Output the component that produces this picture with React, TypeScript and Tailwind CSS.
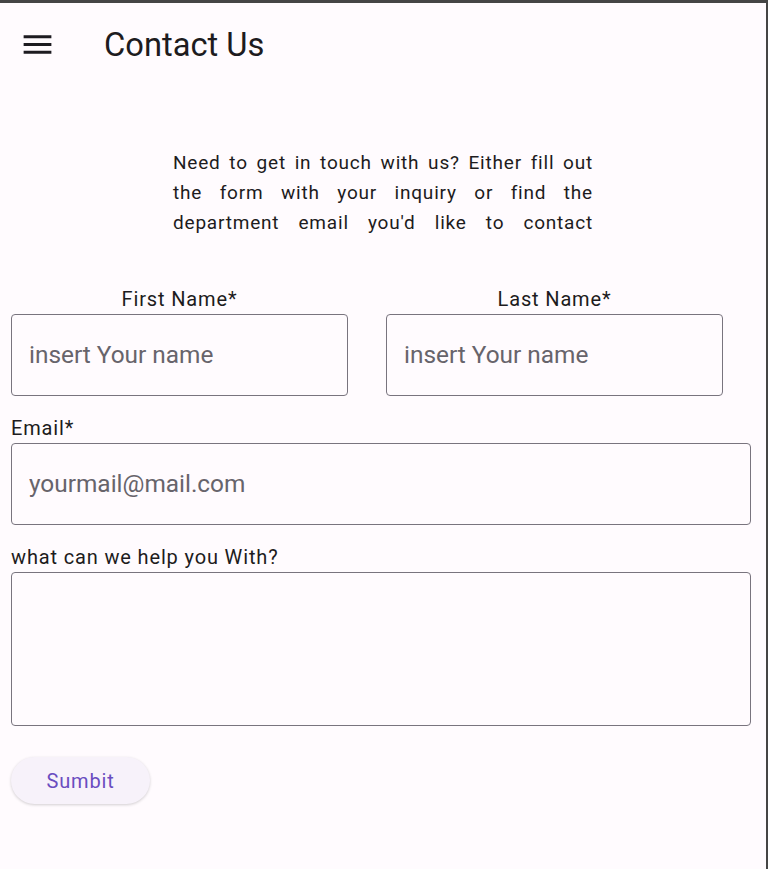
import React from 'react';

function MenuIcon() {
  return (
    <svg width="37" height="37" viewBox="0 0 24 24" fill="#1d1b20">
      <path d="M3 18h18v-2H3v2zm0-5h18v-2H3v2zm0-7v2h18V6H3z" />
    </svg>
  );
}

function NameField({ label }: { label: string }) {
  return (
    <div className="flex flex-col w-[337px]">
      <label className="text-center text-[20px] leading-[28px] tracking-[0.85px] mb-[1px]">{label}</label>
      <input
        type="text"
        placeholder="insert Your name"
        className="h-[82px] w-full border border-[#79747e] rounded-[4px] bg-transparent px-[17px] pb-[1px] text-[24.4px] outline-none placeholder:text-[#67646b]"
      />
    </div>
  );
}

export default function App() {
  return (
    <div className="min-h-screen bg-[#fffbfe] border-t-[3px] border-r-2 border-[#454545] font-['Roboto',sans-serif] text-[#1d1b20]">
      {/* App bar */}
      <header className="h-[82px] flex items-center">
        <button className="ml-[19px]" aria-label="Menu">
          <MenuIcon />
        </button>
        <h1 className="ml-[48px] mt-[3px] text-[32.7px] font-normal">Contact Us</h1>
      </header>

      {/* Intro */}
      <p className="mt-[63px] w-[420px] mx-auto text-[19px] leading-[30px] tracking-[0.8px] text-justify [text-align-last:justify]">
        Need to get in touch with us? Either fill out the form with your inquiry or find the department email you'd like to contact
      </p>

      {/* Form */}
      <form className="mt-[47px] pl-[11px] flex flex-col" onSubmit={(e) => e.preventDefault()}>
        <div className="flex gap-[38px]">
          <NameField label="First Name*" />
          <NameField label="Last Name*" />
        </div>

        <label className="mt-[18px] mb-[1px] text-[20px] leading-[28px] tracking-[0.85px]">Email*</label>
        <input
          type="email"
          placeholder="yourmail@mail.com"
          className="h-[82px] w-[740px] border border-[#79747e] rounded-[4px] bg-transparent px-[17px] pb-[1px] text-[24.4px] outline-none placeholder:text-[#67646b]"
        />

        <label className="mt-[18px] mb-[1px] text-[20px] leading-[28px] tracking-[0.85px]">what can we help you With?</label>
        <textarea className="h-[154px] w-[740px] border border-[#79747e] rounded-[4px] bg-transparent px-[17px] py-3 text-[24px] outline-none resize-none" />

        <button
          type="submit"
          className="mt-[31px] h-[47px] w-[139px] rounded-full bg-[#f7f2fa] text-[#6a4dc0] text-[20px] tracking-[0.85px] shadow-[0_1px_3px_rgba(0,0,0,0.18)]"
        >
          Sumbit
        </button>
      </form>
    </div>
  );
}
